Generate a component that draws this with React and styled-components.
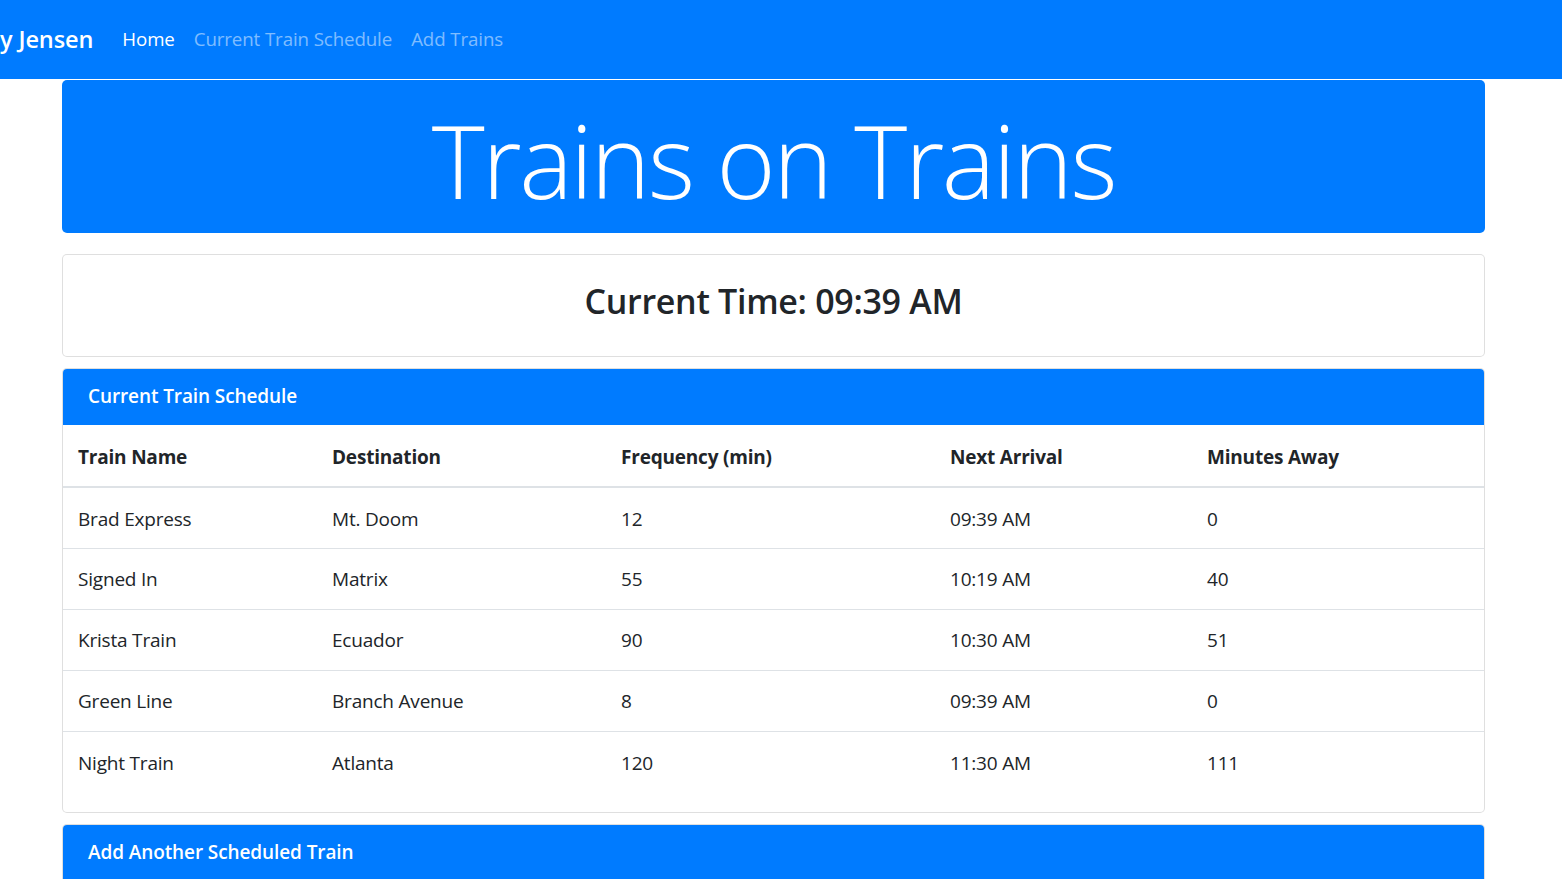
import React from "react";
import styled, { createGlobalStyle } from "styled-components";

const GlobalStyle = createGlobalStyle`
  * { box-sizing: border-box; }
  body {
    margin: 0;
    font-family: "Open Sans", "Noto Sans", sans-serif;
    color: #212529;
    background: #fff;
    font-size: 20px;
    line-height: 1.5;
  }
`;

const Navbar = styled.nav`
  height: 79px;
  background: #007bff;
  display: flex;
  align-items: center;
  overflow: hidden;
`;

const Brand = styled.a`
  font-size: 23.5px;
  font-weight: 600;
  color: #fff;
  margin-right: 20px;
  white-space: nowrap;
  letter-spacing: -0.1px;
`;

const NavLink = styled.a`
  font-size: 18.7px;
  color: ${(p) => (p.$active ? "#fff" : "rgba(255,255,255,0.5)")};
  padding: 0 10px 0 9px;
  margin-top: -1px;
  white-space: nowrap;
  letter-spacing: -0.1px;
`;

const Container = styled.main`
  width: 1423px;
  margin: 1px 0 0 62px;
  display: flex;
  flex-direction: column;
`;

const Jumbotron = styled.header`
  height: 153px;
  background: #007bff;
  border-radius: 5px;
  display: flex;
  align-items: center;
  justify-content: center;
  margin-bottom: 21px;
`;

const Title = styled.h1`
  margin: 0;
  color: #fff;
  font-weight: 300;
  font-size: 101px;
  letter-spacing: -2.4px;
  line-height: 1;
  padding-top: 8px;
`;

const Card = styled.section`
  border: 1px solid rgba(0, 0, 0, 0.125);
  border-radius: 5px;
  overflow: hidden;
  margin-bottom: ${(p) => p.$gap || "11px"};
  background: #fff;
`;

const TimeBody = styled.div`
  height: 101px;
  display: flex;
  align-items: center;
  justify-content: center;
`;

const TimeText = styled.h2`
  margin: -8px 0 0;
  font-size: 34px;
  font-weight: 600;
  letter-spacing: -0.3px;
  color: #212529;
`;

const CardHeader = styled.div`
  height: 57px;
  background: #007bff;
  color: #fff;
  font-size: 19px;
  font-weight: 600;
  padding: 0 25px 0 26px;
  display: flex;
  align-items: center;
  letter-spacing: -0.1px;
  margin: -1px -1px 0;
`;

const Table = styled.table`
  width: 100%;
  border-collapse: collapse;
  table-layout: fixed;
  margin-bottom: 20px;
`;

const Th = styled.th`
  text-align: left;
  font-weight: 700;
  font-size: 19px;
  height: 62px;
  padding: 3px 15px 0;
  border-bottom: 2px solid #dee2e6;
  letter-spacing: -0.2px;
  width: ${(p) => p.$w}px;
`;

const Td = styled.td`
  font-size: 19px;
  height: 61px;
  padding: 2px 15px 0;
  border-top: 1px solid #dee2e6;
  letter-spacing: -0.2px;
  color: #212529;
`;

const FormBody = styled.div`
  padding: 25px;
`;

const Input = styled.input`
  display: block;
  width: 100%;
  height: 48px;
  border: 1px solid #ced4da;
  border-radius: 5px;
  font-size: 19px;
  padding: 0 15px;
  margin-bottom: 20px;
  font-family: inherit;
`;

const cols = [
  { name: "Train Name", w: 254 },
  { name: "Destination", w: 289 },
  { name: "Frequency (min)", w: 329 },
  { name: "Next Arrival", w: 257 },
  { name: "Minutes Away", w: 292 },
];

const trains = [
  ["Brad Express", "Mt. Doom", "12", "09:39 AM", "0"],
  ["Signed In", "Matrix", "55", "10:19 AM", "40"],
  ["Krista Train", "Ecuador", "90", "10:30 AM", "51"],
  ["Green Line", "Branch Avenue", "8", "09:39 AM", "0"],
  ["Night Train", "Atlanta", "120", "11:30 AM", "111"],
];

const App = () => {
  return (
    <>
      <GlobalStyle />
      <Navbar>
        <Brand>y Jensen</Brand>
        <NavLink $active>Home</NavLink>
        <NavLink>Current Train Schedule</NavLink>
        <NavLink>Add Trains</NavLink>
      </Navbar>

      <Container>
        <Jumbotron>
          <Title>Trains on Trains</Title>
        </Jumbotron>

        {/* Clock */}
        <Card>
          <TimeBody>
            <TimeText>Current Time: 09:39 AM</TimeText>
          </TimeBody>
        </Card>

        {/* Schedule */}
        <Card $gap="11px">
          <CardHeader>Current Train Schedule</CardHeader>
          <Table>
            <thead>
              <tr>
                {cols.map((c) => (
                  <Th key={c.name} $w={c.w}>{c.name}</Th>
                ))}
              </tr>
            </thead>
            <tbody>
              {trains.map((row) => (
                <tr key={row[0]}>
                  {row.map((cell, i) => (
                    <Td key={i}>{cell}</Td>
                  ))}
                </tr>
              ))}
            </tbody>
          </Table>
        </Card>

        {/* Add train form */}
        <Card>
          <CardHeader>Add Another Scheduled Train</CardHeader>
          <FormBody>
            <Input aria-label="Train Name" />
            <Input aria-label="Destination" />
          </FormBody>
        </Card>
      </Container>
    </>
  );
};

export default App;
